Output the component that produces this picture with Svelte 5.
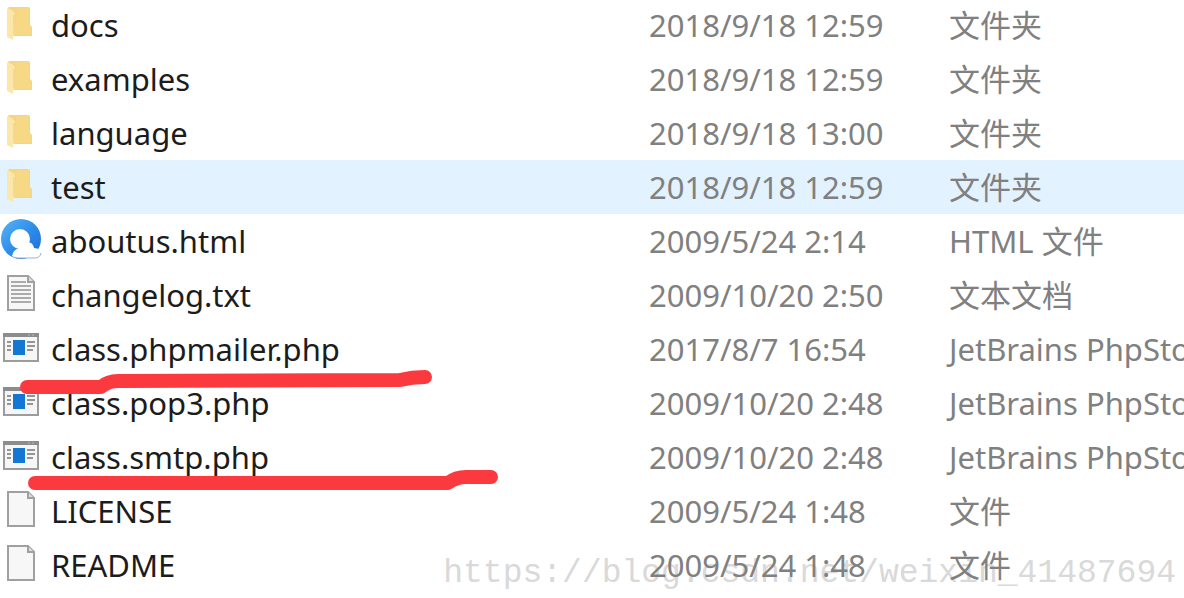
<script lang="ts">
	type Kind = 'folder' | 'html' | 'text' | 'php' | 'blank';

	interface Entry {
		name: string;
		modified: string;
		type: string;
		kind: Kind;
	}

	const entries: Entry[] = [
		{ name: 'docs', modified: '2018/9/18 12:59', type: '文件夹', kind: 'folder' },
		{ name: 'examples', modified: '2018/9/18 12:59', type: '文件夹', kind: 'folder' },
		{ name: 'language', modified: '2018/9/18 13:00', type: '文件夹', kind: 'folder' },
		{ name: 'test', modified: '2018/9/18 12:59', type: '文件夹', kind: 'folder' },
		{ name: 'aboutus.html', modified: '2009/5/24 2:14', type: 'HTML 文件', kind: 'html' },
		{ name: 'changelog.txt', modified: '2009/10/20 2:50', type: '文本文档', kind: 'text' },
		{ name: 'class.phpmailer.php', modified: '2017/8/7 16:54', type: 'JetBrains PhpStorm', kind: 'php' },
		{ name: 'class.pop3.php', modified: '2009/10/20 2:48', type: 'JetBrains PhpStorm', kind: 'php' },
		{ name: 'class.smtp.php', modified: '2009/10/20 2:48', type: 'JetBrains PhpStorm', kind: 'php' },
		{ name: 'LICENSE', modified: '2009/5/24 1:48', type: '文件', kind: 'blank' },
		{ name: 'README', modified: '2009/5/24 1:48', type: '文件', kind: 'blank' }
	];

	let selected = $state('test');
</script>

{#snippet icon(kind: Kind)}
	<svg class="icon" viewBox="0 0 42 54" aria-hidden="true">
		{#if kind === 'folder'}
			<path d="M9 9H28Q30 9 30 11V27L32 29V38H12L8 35V11Q8 9 9 9Z" fill="#f5d584" />
			<path d="M17 10H29V27L31 29V37H14Z" fill="#f7d885" />
			<path d="M8 10L13 13Q15 14 15 17V36L13 38V42L7 39V11Z" fill="#fce6a8" />
			<path d="M14 17V36" stroke="#eeca73" stroke-width="1" />
		{:else if kind === 'html'}
			<defs>
				<linearGradient id="ring" x1="0" y1="0" x2="1" y2="1">
					<stop offset="0" stop-color="#58b5f6" />
					<stop offset="0.5" stop-color="#2f8eea" />
					<stop offset="1" stop-color="#1c69d4" />
				</linearGradient>
			</defs>
			<circle cx="21" cy="25" r="20" fill="url(#ring)" />
			<circle cx="20" cy="25" r="10" fill="#fff" />
			<path
				d="M12 42Q13 36 19 34Q20 28 27 28Q33 28 34 34Q41 34 41 40Q40 44 35 44H18Q14 44 12 42Z"
				fill="#fff"
			/>
			<path d="M14 43Q16 44 18 44H35Q40 44 41 39" fill="none" stroke="#9fb2c8" stroke-width="1" />
		{:else if kind === 'php'}
			<rect x="4" y="12" width="34" height="27" fill="#f6f6f6" stroke="#9c9c9c" stroke-width="2" />
			<path d="M3 13H39" stroke="#8c8c8c" stroke-width="4" />
			<path d="M28 13H30M32 13H34" stroke="#b9b9b9" stroke-width="1" />
			<rect x="13" y="18" width="12" height="15" fill="#1477d4" />
			<path d="M7 20H11M7 24H11M7 28H11M27 20H35M27 24H35M27 28H33" stroke="#959595" stroke-width="2" />
		{:else}
			<path d="M8 8H28L34 14V42H8Z" fill="#f7f7f7" stroke="#a0a0a0" stroke-width="2" />
			<path d="M28 8V14H34" fill="#ddd" stroke="#a0a0a0" stroke-width="2" />
			{#if kind === 'text'}
				<path
					d="M11 14H26M11 18H31M11 22H31M11 26H31M11 30H31M11 34H31"
					stroke="#929292"
					stroke-width="1.6"
				/>
			{/if}
		{/if}
	</svg>
{/snippet}

<main class="explorer">
	<div class="watermark">https://blog.csdn.net/weixin_41487694</div>

	<table class="files">
		<colgroup>
			<col class="col-name" />
			<col class="col-date" />
			<col />
		</colgroup>
		<tbody>
			{#each entries as entry (entry.name)}
				<tr class:selected={selected === entry.name} onclick={() => (selected = entry.name)}>
					<td class="name">
						<div class="file">
							{@render icon(entry.kind)}
							<span>{entry.name}</span>
						</div>
					</td>
					<td>{entry.modified}</td>
					<td>{entry.type}</td>
				</tr>
			{/each}
		</tbody>
	</table>

	<!-- hand-drawn marks under the two class files -->
	<svg class="marks" viewBox="0 0 520 600" aria-hidden="true">
		<path d="M27 387H101Q108 381 118 381L400 380Q412 377 425 377" />
		<path d="M35 483H448Q456 477 466 477H491" />
	</svg>
</main>

<style>
	:global(body) {
		margin: 0;
		background: #fff;
	}

	.explorer {
		position: relative;
		overflow: hidden;
		height: 100vh;
		font-family: 'Noto Sans', 'Noto Sans CJK SC', sans-serif;
		font-size: 31px;
		line-height: 54px;
		color: #808080;
	}

	.files {
		position: relative;
		width: 100%;
		margin-top: -2px;
		table-layout: fixed;
		border-collapse: collapse;
	}

	.col-name {
		width: 649px;
	}

	.col-date {
		width: 300px;
	}

	td {
		height: 54px;
		padding: 0;
		white-space: nowrap;
	}

	.name {
		color: #1c1c1c;
	}

	.selected {
		background: #e3f2ff;
	}

	.file {
		display: flex;
		gap: 9px;
	}

	.icon {
		flex: none;
		width: 42px;
		height: 54px;
	}

	.marks {
		position: absolute;
		top: 0;
		left: 0;
		width: 520px;
		height: 600px;
		fill: none;
		stroke: #fb3a40;
		stroke-width: 14px;
		stroke-linecap: round;
		stroke-linejoin: round;
		pointer-events: none;
	}

	.watermark {
		position: absolute;
		right: 8px;
		bottom: 0;
		font-family: 'Liberation Mono', monospace;
		font-size: 33px;
		line-height: 48px;
		color: #d9d9d9;
	}
</style>
